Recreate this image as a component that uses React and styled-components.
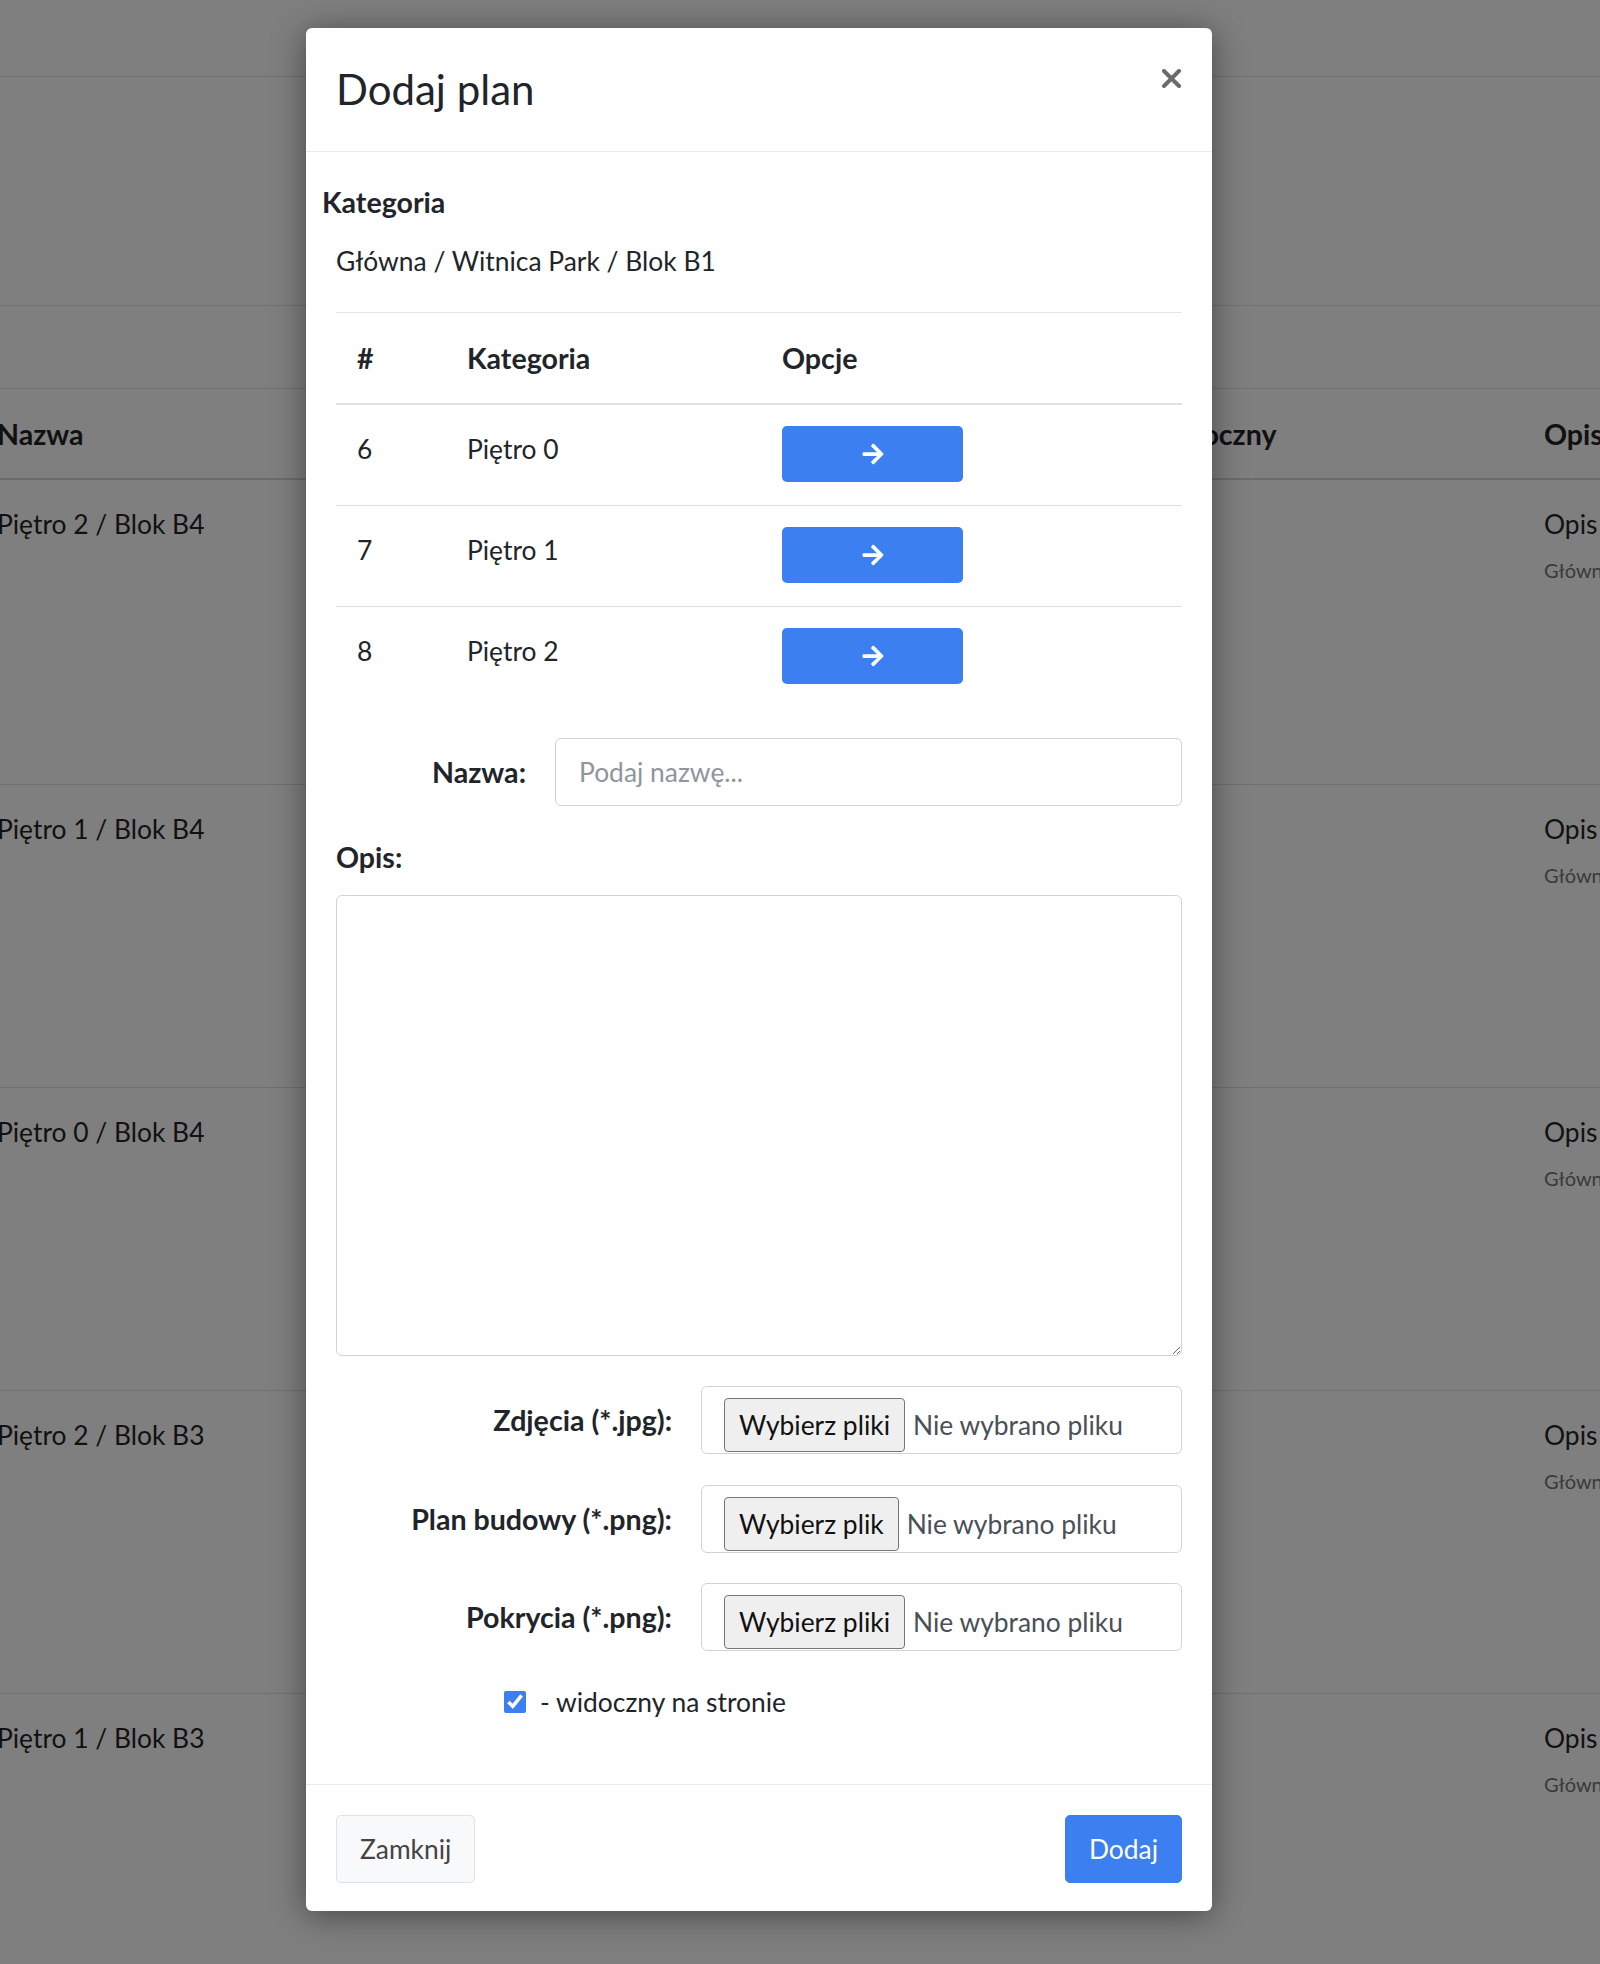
import React from "react";
import styled, { createGlobalStyle } from "styled-components";
import { FaArrowRight } from "react-icons/fa";

const GlobalStyle = createGlobalStyle`
  * { box-sizing: border-box; }
  body {
    margin: 0;
    background: #7f7f7f;
    font-family: Lato, "Open Sans", sans-serif;
    color: #212529;
  }
`;

const Page = styled.div`
  position: relative;
  width: 1600px;
  height: 1964px;
  overflow: hidden;
`;

/* dimmed page behind the modal */
const Backdrop = styled.div`
  color: #111;
  font-size: 26.4px;
  white-space: nowrap;
`;

const Band = styled.div`
  height: ${(p) => p.h}px;
  border-bottom: 1px solid #707070;
`;

const BgGrid = styled.div`
  display: grid;
  grid-template-columns: 1152px 395px 1fr;
  margin-left: -3px;
`;

const BgHead = styled(BgGrid)`
  height: 91px;
  align-items: center;
  font-weight: 700;
  font-size: 28.6px;
  border-bottom: 2px solid #6c6c6c;
`;

const BgRow = styled(BgGrid)`
  height: ${(p) => p.h || 303}px;
  padding-top: 24px;
  align-items: start;
  line-height: 40px;
  border-bottom: 1px solid #707070;
`;

const BgSub = styled.div`
  margin-top: 11px;
  font-size: 20px;
  line-height: 30px;
  color: #3a3a3a;
`;

const Modal = styled.div`
  position: absolute;
  left: 306px;
  top: 28px;
  width: 906px;
  background: #fff;
  border-radius: 6px;
  box-shadow: 0 4px 34px rgba(0, 0, 0, 0.45);
`;

const Header = styled.div`
  height: 124px;
  padding: 0 30px;
  display: flex;
  justify-content: space-between;
  align-items: center;
  border-bottom: 1px solid #e9ecef;
`;

const Title = styled.h4`
  margin: 0;
  font-size: 42px;
  font-weight: 400;
  line-height: 1.2;
`;

const CloseButton = styled.button`
  align-self: flex-start;
  margin-top: 41px;
  padding: 0;
  border: none;
  background: none;
  display: flex;
  cursor: pointer;
`;

const Body = styled.div`
  padding: 30px 30px 62px;
  font-size: 26.4px;
  line-height: 40px;
`;

const SectionLabel = styled.div`
  font-weight: 700;
  font-size: 28.6px;
  margin-left: ${(p) => (p.outdent ? "-14px" : "0")};
  margin-top: ${(p) => p.mt || 0}px;
`;

const PathText = styled.div`
  margin-top: 19px;
`;

const Divider = styled.div`
  margin-top: 31px;
  border-top: 1px solid #e3e6e9;
`;

const Grid = styled.div`
  display: grid;
  grid-template-columns: 110px 315px 1fr;
`;

const TableHead = styled(Grid)`
  height: 92px;
  align-items: center;
  font-weight: 700;
  font-size: 28.6px;
  border-bottom: 2px solid #dee2e6;
`;

const TableRow = styled(Grid)`
  align-items: start;
  padding: 21px 0 23px;
  border-bottom: ${(p) => (p.last ? "none" : "1px solid #dee2e6")};
`;

const Cell = styled.div`
  padding-left: 21px;
  margin-top: ${(p) => (p.text ? "3px" : "0")};
`;

const ArrowButton = styled.button`
  width: 181px;
  height: 56px;
  border: none;
  border-radius: 5px;
  background: #3b7ff1;
  color: #fff;
  display: flex;
  align-items: center;
  justify-content: center;
  cursor: pointer;
`;

const FormRow = styled.div`
  display: grid;
  grid-template-columns: ${(p) => p.labelWidth}px 1fr;
  column-gap: 29px;
  align-items: center;
  margin-top: ${(p) => p.mt}px;
`;

const FormLabel = styled.label`
  text-align: right;
  font-weight: 700;
  font-size: 28.6px;
`;

const TextInput = styled.input`
  height: 68px;
  width: 100%;
  padding: 0 23px;
  border: 1px solid #ced4da;
  border-radius: 6px;
  font: inherit;
  color: #495057;
  &::placeholder {
    color: #8e959b;
  }
`;

const TextArea = styled.textarea`
  display: block;
  margin-top: 18px;
  width: 100%;
  height: 461px;
  border: 1px solid #ced4da;
  border-radius: 6px;
  font: inherit;
  resize: vertical;
`;

const FileBox = styled.div`
  height: 68px;
  border: 1px solid #ced4da;
  border-radius: 6px;
  display: flex;
  align-items: flex-end;
  padding: 0 0 1px 22px;
`;

const FileButton = styled.button`
  height: 54px;
  padding: 0 14px;
  background: #efefef;
  border: 1px solid #767676;
  border-radius: 4px;
  font: inherit;
  color: #111;
`;

const FileStatus = styled.span`
  margin-left: 8px;
  line-height: 54px;
  color: #495057;
`;

const CheckRow = styled.label`
  display: flex;
  align-items: center;
  gap: 14px;
  margin: 31px 0 0 168px;
`;

const Checkbox = styled.input`
  width: 22px;
  height: 22px;
  margin: 0;
  accent-color: #3b7ff1;
`;

const Footer = styled.div`
  display: flex;
  justify-content: space-between;
  padding: 30px 30px 28px;
  border-top: 1px solid #e9ecef;
`;

const FooterButton = styled.button`
  height: 68px;
  padding: 0 23px;
  border-radius: 5px;
  font: inherit;
  font-size: 26.4px;
  cursor: pointer;
  background: ${(p) => (p.primary ? "#3b7ff1" : "#f8f9fa")};
  border: 1px solid ${(p) => (p.primary ? "#3b7ff1" : "#dfe2e5")};
  color: ${(p) => (p.primary ? "#fff" : "#444")};
`;

const bgRows = [
  { name: "Piętro 2 / Blok B4", h: 305 },
  { name: "Piętro 1 / Blok B4" },
  { name: "Piętro 0 / Blok B4" },
  { name: "Piętro 2 / Blok B3" },
  { name: "Piętro 1 / Blok B3" },
];

const floors = [
  { id: 6, name: "Piętro 0" },
  { id: 7, name: "Piętro 1" },
  { id: 8, name: "Piętro 2" },
];

const files = [
  { label: "Zdjęcia (*.jpg):", button: "Wybierz pliki", mt: 30 },
  { label: "Plan budowy (*.png):", button: "Wybierz plik", mt: 31 },
  { label: "Pokrycia (*.png):", button: "Wybierz pliki", mt: 30 },
];

export default function App() {
  return (
    <Page>
      <GlobalStyle />
      <Backdrop>
        <Band h={77} />
        <Band h={229} />
        <Band h={83} />
        <BgHead>
          <div>Nazwa</div>
          <div>Widoczny</div>
          <div>Opis</div>
        </BgHead>
        {bgRows.map((row) => (
          <BgRow key={row.name} h={row.h}>
            <div>{row.name}</div>
            <div />
            <div>
              Opis
              <BgSub>Główna / Witnica Park</BgSub>
            </div>
          </BgRow>
        ))}
      </Backdrop>

      <Modal>
        <Header>
          <Title>Dodaj plan</Title>
          <CloseButton aria-label="Zamknij">
            <svg width="21" height="19" viewBox="0 0 21 19">
              <path
                d="M3 2 L18 17 M18 2 L3 17"
                stroke="#6b6b6b"
                strokeWidth="4"
                strokeLinecap="round"
              />
            </svg>
          </CloseButton>
        </Header>

        <Body>
          <SectionLabel outdent>Kategoria</SectionLabel>
          <PathText>Główna / Witnica Park / Blok B1</PathText>
          <Divider />
          <TableHead>
            <Cell>#</Cell>
            <Cell>Kategoria</Cell>
            <Cell>Opcje</Cell>
          </TableHead>
          {floors.map((f, i) => (
            <TableRow key={f.id} last={i === floors.length - 1}>
              <Cell text>{f.id}</Cell>
              <Cell text>{f.name}</Cell>
              <Cell>
                <ArrowButton>
                  <FaArrowRight size={24} />
                </ArrowButton>
              </Cell>
            </TableRow>
          ))}

          <FormRow labelWidth={190} mt={31}>
            <FormLabel>Nazwa:</FormLabel>
            <TextInput placeholder="Podaj nazwę..." />
          </FormRow>

          <SectionLabel mt={31}>Opis:</SectionLabel>
          <TextArea />

          {files.map((f) => (
            <FormRow key={f.label} labelWidth={336} mt={f.mt}>
              <FormLabel>{f.label}</FormLabel>
              <FileBox>
                <FileButton>{f.button}</FileButton>
                <FileStatus>Nie wybrano pliku</FileStatus>
              </FileBox>
            </FormRow>
          ))}

          <CheckRow>
            <Checkbox type="checkbox" defaultChecked />
            <span>- widoczny na stronie</span>
          </CheckRow>
        </Body>

        <Footer>
          <FooterButton>Zamknij</FooterButton>
          <FooterButton primary>Dodaj</FooterButton>
        </Footer>
      </Modal>
    </Page>
  );
}
